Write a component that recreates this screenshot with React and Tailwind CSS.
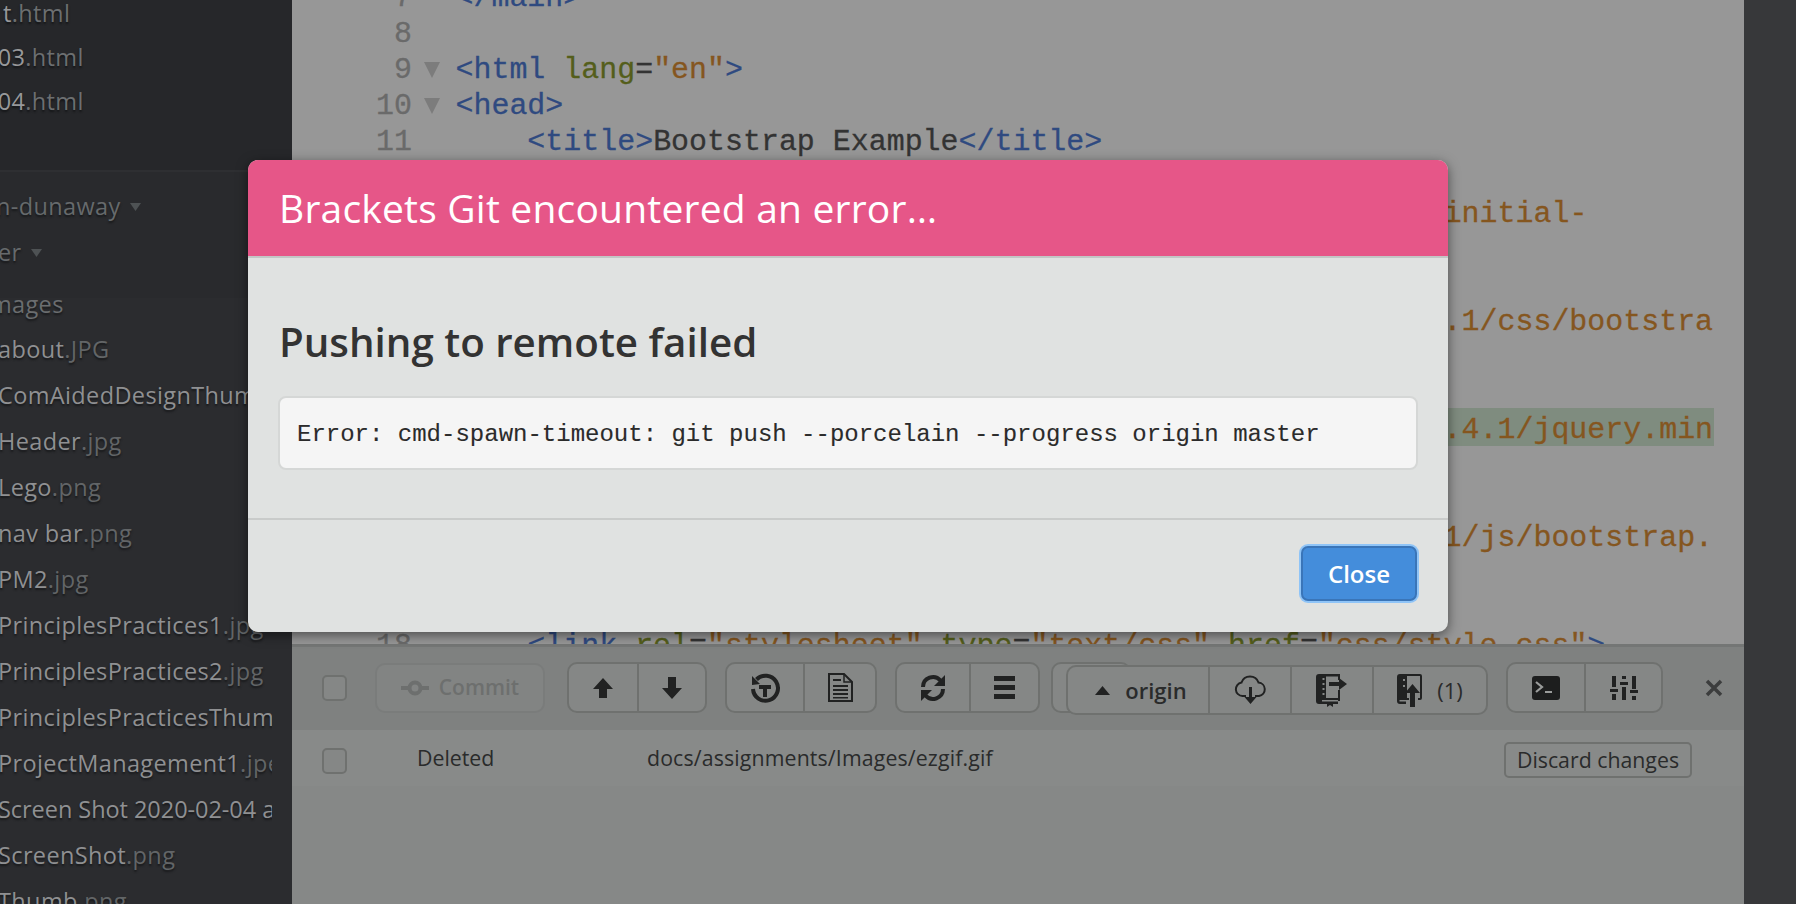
const UI = "font-['Open_Sans','Noto_Sans',sans-serif]";
const MONO = "font-['Liberation_Mono',monospace]";

function FileRow({ name, ext, track = "tracking-[0.37px]" }) {
  return (
    <div className={"h-[46px] leading-[46px] w-[274px] overflow-hidden whitespace-nowrap text-[23.500px] [text-shadow:0_2px_2px_#18191b] " + track}>
      <span className="text-[#8f9092]">{name}</span>
      <span className="text-[#626567]">{ext}</span>
    </div>
  );
}

function TopRow({ name, ext, cls = "" }) {
  return (
    <div className={"h-[44px] leading-[44px] whitespace-nowrap text-[23.500px] tracking-[0.37px] [text-shadow:0_2px_2px_#141517] " + cls}>
      <span className="text-[#97989a]">{name}</span>
      <span className="text-[#6c6f71]">{ext}</span>
    </div>
  );
}

const Caret = ({ cls = "" }) => (
  <svg width="11" height="8" viewBox="0 0 11 8" className={cls}><path d="M0 0h11L5.500 8z" fill="#4e5254" /></svg>
);

function Sidebar() {
  return (
    <div className={"w-[292px] shrink-0 flex flex-col overflow-hidden bg-[#2b2c2f] " + UI}>
      <div className="h-[170px] shrink-0 bg-[#26272a]">
        <div className="-mt-[9px]">
          <TopRow name="t" ext=".html" cls="ml-[3px]" />
          <TopRow name="x03" ext=".html" cls="-ml-[15px]" />
          <TopRow name="x04" ext=".html" cls="-ml-[15px]" />
        </div>
      </div>
      <div className="h-[128px] shrink-0 bg-[#292a2d] border-t-[2px] border-[#2e2f32] pt-[11px] text-[23.500px] tracking-[0.37px] text-[#666a6c] [text-shadow:0_2px_2px_#18191b]">
        <div className="h-[46px] leading-[46px] flex items-center whitespace-nowrap -ml-[4px]">n-dunaway<Caret cls="ml-[9px] mt-[2px]" /></div>
        <div className="h-[46px] leading-[46px] flex items-center whitespace-nowrap -ml-[2px]">er<Caret cls="ml-[9px] mt-[2px]" /></div>
      </div>
      <div className="-ml-[2px] -mt-[15px]">
        <div className="h-[43px] leading-[43px] -ml-[15px] text-[23.500px] tracking-[0.37px] text-[#6a6d6f] [text-shadow:0_2px_2px_#18191b]">Images</div>
        <FileRow name="about" ext=".JPG" />
        <FileRow name="ComAidedDesignThumb" ext=".png" />
        <FileRow name="Header" ext=".jpg" />
        <FileRow name="Lego" ext=".png" />
        <FileRow name="nav bar" ext=".png" />
        <FileRow name="PM2" ext=".jpg" />
        <FileRow name="PrinciplesPractices1" ext=".jpg" />
        <FileRow name="PrinciplesPractices2" ext=".jpg" />
        <FileRow name="PrinciplesPracticesThumb" ext=".png" />
        <FileRow name="ProjectManagement1" ext=".jpeg" />
        <FileRow name="Screen Shot 2020-02-04 at" ext=".png" track="tracking-[-0.05px]" />
        <FileRow name="ScreenShot" ext=".png" />
        <FileRow name="Thumb" ext=".png" />
      </div>
    </div>
  );
}

const T = ({ children }) => <span className="text-[#2f4a80]">{children}</span>;
const A = ({ children }) => <span className="text-[#545e1b]">{children}</span>;
const S = ({ children }) => <span className="text-[#85561f]">{children}</span>;
const P = ({ children }) => <span className="text-[#333]">{children}</span>;

function Line({ n, fold, children }) {
  return (
    <div className="flex h-[36px] leading-[36px] whitespace-pre">
      <div className="w-[120px] shrink-0 text-right text-[#6a6a6a]">{n}</div>
      <div className="w-[43.500px] shrink-0 flex items-center pl-[12px]">
        {fold && <svg width="16" height="16" viewBox="0 0 16 16"><path d="M0 0h16L8 16z" fill="#7c7c7c" /></svg>}
      </div>
      <div className="flex-1 min-w-0">{children}</div>
    </div>
  );
}

function Editor() {
  return (
    <div className={"h-[644px] shrink-0 bg-[#979797] overflow-hidden text-[29.950px] [-webkit-text-stroke:0.3px] " + MONO}>
      <div className="-mt-[20px]">
        <Line n="7"><T>{"</main>"}</T></Line>
        <Line n="8" />
        <Line n="9" fold><T>{"<html "}</T><A>lang</A><P>=</P><S>"en"</S><T>{">"}</T></Line>
        <Line n="10" fold><T>{"<head>"}</T></Line>
        <Line n="11"><T>{"    <title>"}</T><P>Bootstrap Example</P><T>{"</title>"}</T></Line>
        <Line n="12"><T>{"    <meta "}</T><A>charset</A><P>=</P><S>"utf-8"</S><T>{">"}</T></Line>
        <Line n="13"><T>{"    <meta "}</T><A>name</A><P>=</P><S>"viewport"</S><A> content</A><P>=</P><S>"width=device-width, initial-</S></Line>
        <Line><S>{"scale=1\""}</S><T>{">"}</T></Line>
        <Line n="14"><T>{"    <link "}</T><A>rel</A><P>=</P><S>"stylesheet"</S><A> href</A><P>=</P><S>"https://</S></Line>
        <Line><S>{"                  maxcdn.bootstrapcdn.com/bootstrap/3.4.1/css/bootstra"}</S></Line>
        <Line><S>p.min.css"</S><T>{">"}</T></Line>
        <Line n="15"><T>{"    <script "}</T><A>src</A><P>=</P><S>"https://</S></Line>
        <Line>
          <span className="block h-[38px] -mt-[4px] w-[1258px] bg-[#7f8c7f] leading-[44px]"><S>{"                 ajax.googleapis.com/ajax/libs/jquery/3.4.1/jquery.min"}</S></span>
        </Line>
        <Line><S>.js"</S><T>{"></script>"}</T></Line>
        <Line n="16"><T>{"    <script "}</T><A>src</A><P>=</P><S>"https://</S></Line>
        <Line><S>{"                 maxcdn.bootstrapcdn.com/bootstrap/3.4.1/js/bootstrap."}</S></Line>
        <Line><S>min.js"</S><T>{"></script>"}</T></Line>
        <Line n="17" />
        <Line n="18"><T>{"    <link "}</T><A>rel</A><P>=</P><S>"stylesheet"</S><A> type</A><P>=</P><S>"text/css"</S><A> href</A><P>=</P><S>"css/style.css"</S><T>{">"}</T></Line>
      </div>
    </div>
  );
}

const Cell = ({ w, children, cls = "" }) => (
  <div className={"h-full flex items-center justify-center shrink-0 " + w + " " + cls}>{children}</div>
);

const Group = ({ w, children, cls = "" }) => (
  <div className={"h-[51px] shrink-0 rounded-[10px] border-[2px] border-[#6f716f] bg-[#858786] flex divide-x-[2px] divide-[#6f716f] overflow-hidden " + w + " " + cls}>{children}</div>
);

const Check = ({ cls = "" }) => (
  <div className={"w-[25px] h-[26px] shrink-0 rounded-[5px] border-[2px] border-[#6f716f] bg-[#858786] " + cls} />
);

const D = "#212222";

const ArrowUp = () => <svg width="20" height="20" viewBox="0 0 20 20"><path d="M10 0 20 11H14V20H6V11H0z" fill={D} /></svg>;
const ArrowDown = () => <svg width="20" height="22" viewBox="0 0 20 22"><path d="M6 0h8v11h6L10 22 0 11h6z" fill={D} /></svg>;
const History = () => (
  <svg width="32" height="32" viewBox="0 0 32 32" fill="none">
    <path d="M7.500 7.500A12.500 12.500 0 1 1 4 17" stroke={D} strokeWidth="4" />
    <path d="M3 4 11 12 3 13z" fill={D} />
    <path d="M10 13h12v4h-4v8h-4v-8h-4z" fill={D} />
  </svg>
);
const FileDoc = () => (
  <svg width="25" height="29" viewBox="0 0 25 29" fill="none">
    <path d="M1 1h15l8 8v19H1z" stroke={D} strokeWidth="2" />
    <path d="M16 1v8h8" stroke={D} strokeWidth="1.500" />
    <path d="M5 6h8v2H5zM5 12h15v2H5zM5 16h15v2H5zM5 20h15v2H5zM5 24h15v1.500H5z" fill={D} />
  </svg>
);
const Refresh = () => (
  <svg width="26" height="28" viewBox="0 0 26 28" fill="none">
    <path d="M3 13A10 10 0 0 1 20.500 6.500" stroke={D} strokeWidth="4" />
    <path d="M25 1v11H14z" fill={D} />
    <path d="M23 15A10 10 0 0 1 5.500 21.500" stroke={D} strokeWidth="4" />
    <path d="M1 27V16h11z" fill={D} />
  </svg>
);
const Bars = () => (
  <svg width="21" height="23" viewBox="0 0 21 23"><path d="M0 0h21v5H0zM0 9h21v5H0zM0 18h21v5H0z" fill={D} /></svg>
);
const Commit = () => (
  <svg width="28" height="16" viewBox="0 0 28 16" fill="none">
    <circle cx="14" cy="8" r="5.500" stroke="#6d6f6e" strokeWidth="4" />
    <path d="M0 8h7M21 8h7" stroke="#6d6f6e" strokeWidth="4" />
  </svg>
);
const Cloud = () => (
  <svg width="33" height="30" viewBox="0 0 33 30" fill="none">
    <path d="M12 21H8.500A6.800 6.800 0 0 1 7.500 7.500 9 9 0 0 1 24.500 7.500 6.800 6.800 0 0 1 25 21H21" stroke={D} strokeWidth="2" />
    <path d="M15 12h3v10h4.500l-6 7-6-7H15z" fill={D} />
  </svg>
);
const BookOut = () => (
  <svg width="32" height="33" viewBox="0 0 32 33">
    <path d="M3 0h21v6h-2V2.500H10V24h12v-8h2v11h-2v-1H6v1.500h16V30h-5v3l-3-2-3 2v-3H3a3 3 0 0 1-3-3V3a3 3 0 0 1 3-3z" fill={D} />
    <path d="M6.500 4h2v2h-2zM6.500 9h2v2h-2zM6.500 14h2v2h-2zM6.500 19h2v2h-2z" fill="#858786" />
    <path d="M13 8h10V4l8 6-8 6v-4H13z" fill={D} />
  </svg>
);
const BookIn = () => (
  <svg width="26" height="33" viewBox="0 0 26 33">
    <path d="M3 0h20a2 2 0 0 1 2 2v22a2 2 0 0 1-2 2h-2v-2h2V2H10v22h2v2H2.500v1.500H9V30H3a3 3 0 0 1-3-3V3a3 3 0 0 1 3-3z" fill={D} />
    <path d="M6 3h3v22H2V4z" fill={D} />
    <path d="M6 5h2v2H6zM6 11h2v2H6z" fill="#858786" />
    <path d="M13 33V19H8l7.500-9L23 19h-5v14z" fill={D} />
  </svg>
);
const Terminal = () => (
  <svg width="28" height="24" viewBox="0 0 28 24" fill="none">
    <rect width="28" height="24" rx="3" fill="#1d1e1e" />
    <path d="M4 6l6 5-6 5" stroke="#9a9c9b" strokeWidth="2.200" />
    <path d="M13 15h7v2h-7z" fill="#9a9c9b" />
  </svg>
);
const Sliders = () => (
  <svg width="28" height="24" viewBox="0 0 28 24">
    <path d="M2 0h4v11H2zM0 13h8v3H0zM2 18h4v6H2zM12 0h4v3h-4zM10 6h8v3h-8zM12 11h4v13h-4zM22 0h4v13h-4zM20 14h8v3h-8zM22 20h4v4h-4z" fill={D} />
  </svg>
);

function Panel() {
  return (
    <div className={"flex-1 flex flex-col bg-[#868887] text-[#2a2b2b] " + UI}>
      <div className="h-[86px] shrink-0 border-t-[3px] border-[#747675] bg-[#7f8180] flex items-center pb-[2px]">
        <Check cls="ml-[30px]" />
        <div className="ml-[28px] w-[170px] h-[50px] shrink-0 rounded-[10px] border-[2px] border-[#7a7c7b] bg-[#828483] flex items-center justify-center gap-[10px] text-[21px] font-semibold text-[#6d6f6e]">
          <Commit />Commit
        </div>
        <Group w="w-[140px]" cls="ml-[22px]">
          <Cell w="w-[70px]"><ArrowUp /></Cell>
          <Cell w="flex-1"><ArrowDown /></Cell>
        </Group>
        <Group w="w-[152px]" cls="ml-[18px]">
          <Cell w="w-[78px]"><History /></Cell>
          <Cell w="flex-1"><FileDoc /></Cell>
        </Group>
        <Group w="w-[145px]" cls="ml-[18px]">
          <Cell w="w-[74px]"><Refresh /></Cell>
          <Cell w="flex-1"><Bars /></Cell>
        </Group>
        <Group w="w-[80px]" cls="ml-[11px]" />
        <div className="-ml-[65px] mt-[5px] w-[422px] h-[50px] shrink-0 rounded-[10px] border-[2px] border-[#6f716f] bg-[#858786] flex divide-x-[2px] divide-[#6f716f] overflow-hidden">
          <Cell w="w-[142px]" cls="gap-[15px] pl-[6px]">
            <svg width="15" height="9" viewBox="0 0 15 9"><path d="M7.500 0 15 9H0z" fill={D} /></svg>
            <span className="text-[22px] font-semibold leading-none">origin</span>
          </Cell>
          <Cell w="w-[82px]"><Cloud /></Cell>
          <Cell w="w-[82px]"><BookOut /></Cell>
          <Cell w="flex-1" cls="gap-[14px]"><BookIn /><span className="text-[22px] leading-none">(1)</span></Cell>
        </div>
        <Group w="w-[157px]" cls="ml-[18px]">
          <Cell w="w-[78px]"><Terminal /></Cell>
          <Cell w="flex-1"><Sliders /></Cell>
        </Group>
        <svg width="18" height="18" viewBox="0 0 18 18" className="ml-[42px]"><path d="M2 2l14 14M16 2 2 16" stroke="#3c3d3d" strokeWidth="3.500" /></svg>
      </div>
      <div className="h-[56px] shrink-0 bg-[#888a89] flex items-center text-[21.300px] pt-[4px]">
        <Check cls="ml-[30px] mt-[2px]" />
        <span className="ml-[70px] w-[230px] shrink-0 -mt-[4px]">Deleted</span>
        <span className="w-[857px] shrink-0 -mt-[4px] tracking-[0.14px]">docs/assignments/Images/ezgif.gif</span>
        <span className="w-[188px] h-[36px] shrink-0 rounded-[5px] border-[2px] border-[#6f716f] flex items-center justify-center">Discard changes</span>
      </div>
    </div>
  );
}

function Modal() {
  return (
    <div className={"absolute left-[248px] top-[160px] w-[1200px] h-[472px] rounded-[10px] bg-[#e0e2e1] shadow-[0_3px_12px_rgba(0,0,0,0.5)] overflow-hidden flex flex-col " + UI}>
      <div className="h-[98px] shrink-0 bg-[#e65688] border-b-[2px] border-[#c3c6c5] flex items-center pl-[31px] text-[39px] tracking-[0.2px] text-white">
        Brackets Git encountered an error…
      </div>
      <div className="h-[262px] shrink-0 border-b-[2px] border-[#c9cbca] pt-[59px] pl-[31px] pr-[31px]">
        <div className="h-[50px] leading-[50px] text-[40.300px] font-semibold text-[#333]">Pushing to remote failed</div>
        <div className={"-ml-[1px] -mr-[1px] mt-[29px] h-[74px] rounded-[8px] border-[2px] border-[#d5d7d6] bg-[#f5f5f5] flex items-center pl-[17px] pt-[3px] text-[24px] text-[#2b2b2b] whitespace-pre [-webkit-text-stroke:0.1px] " + MONO}>
          Error: cmd-spawn-timeout: git push --porcelain --progress origin master
        </div>
      </div>
      <div className="flex-1 flex justify-end pt-[26px] pr-[31px]">
        <div className="w-[116px] h-[55px] rounded-[7px] bg-[#448ddb] border-[2px] border-[#3a75b8] shadow-[0_0_0_2px_#8fc4f7] flex items-center justify-center text-white text-[24px] font-semibold">
          Close
        </div>
      </div>
    </div>
  );
}

export default function App() {
  return (
    <div className="relative w-[1796px] h-[904px] overflow-hidden flex bg-[#37383a]">
      <Sidebar />
      <div className="w-[1452px] shrink-0 flex flex-col">
        <Editor />
        <Panel />
      </div>
      <div className="flex-1 bg-[#37383a]" />
      <Modal />
    </div>
  );
}
